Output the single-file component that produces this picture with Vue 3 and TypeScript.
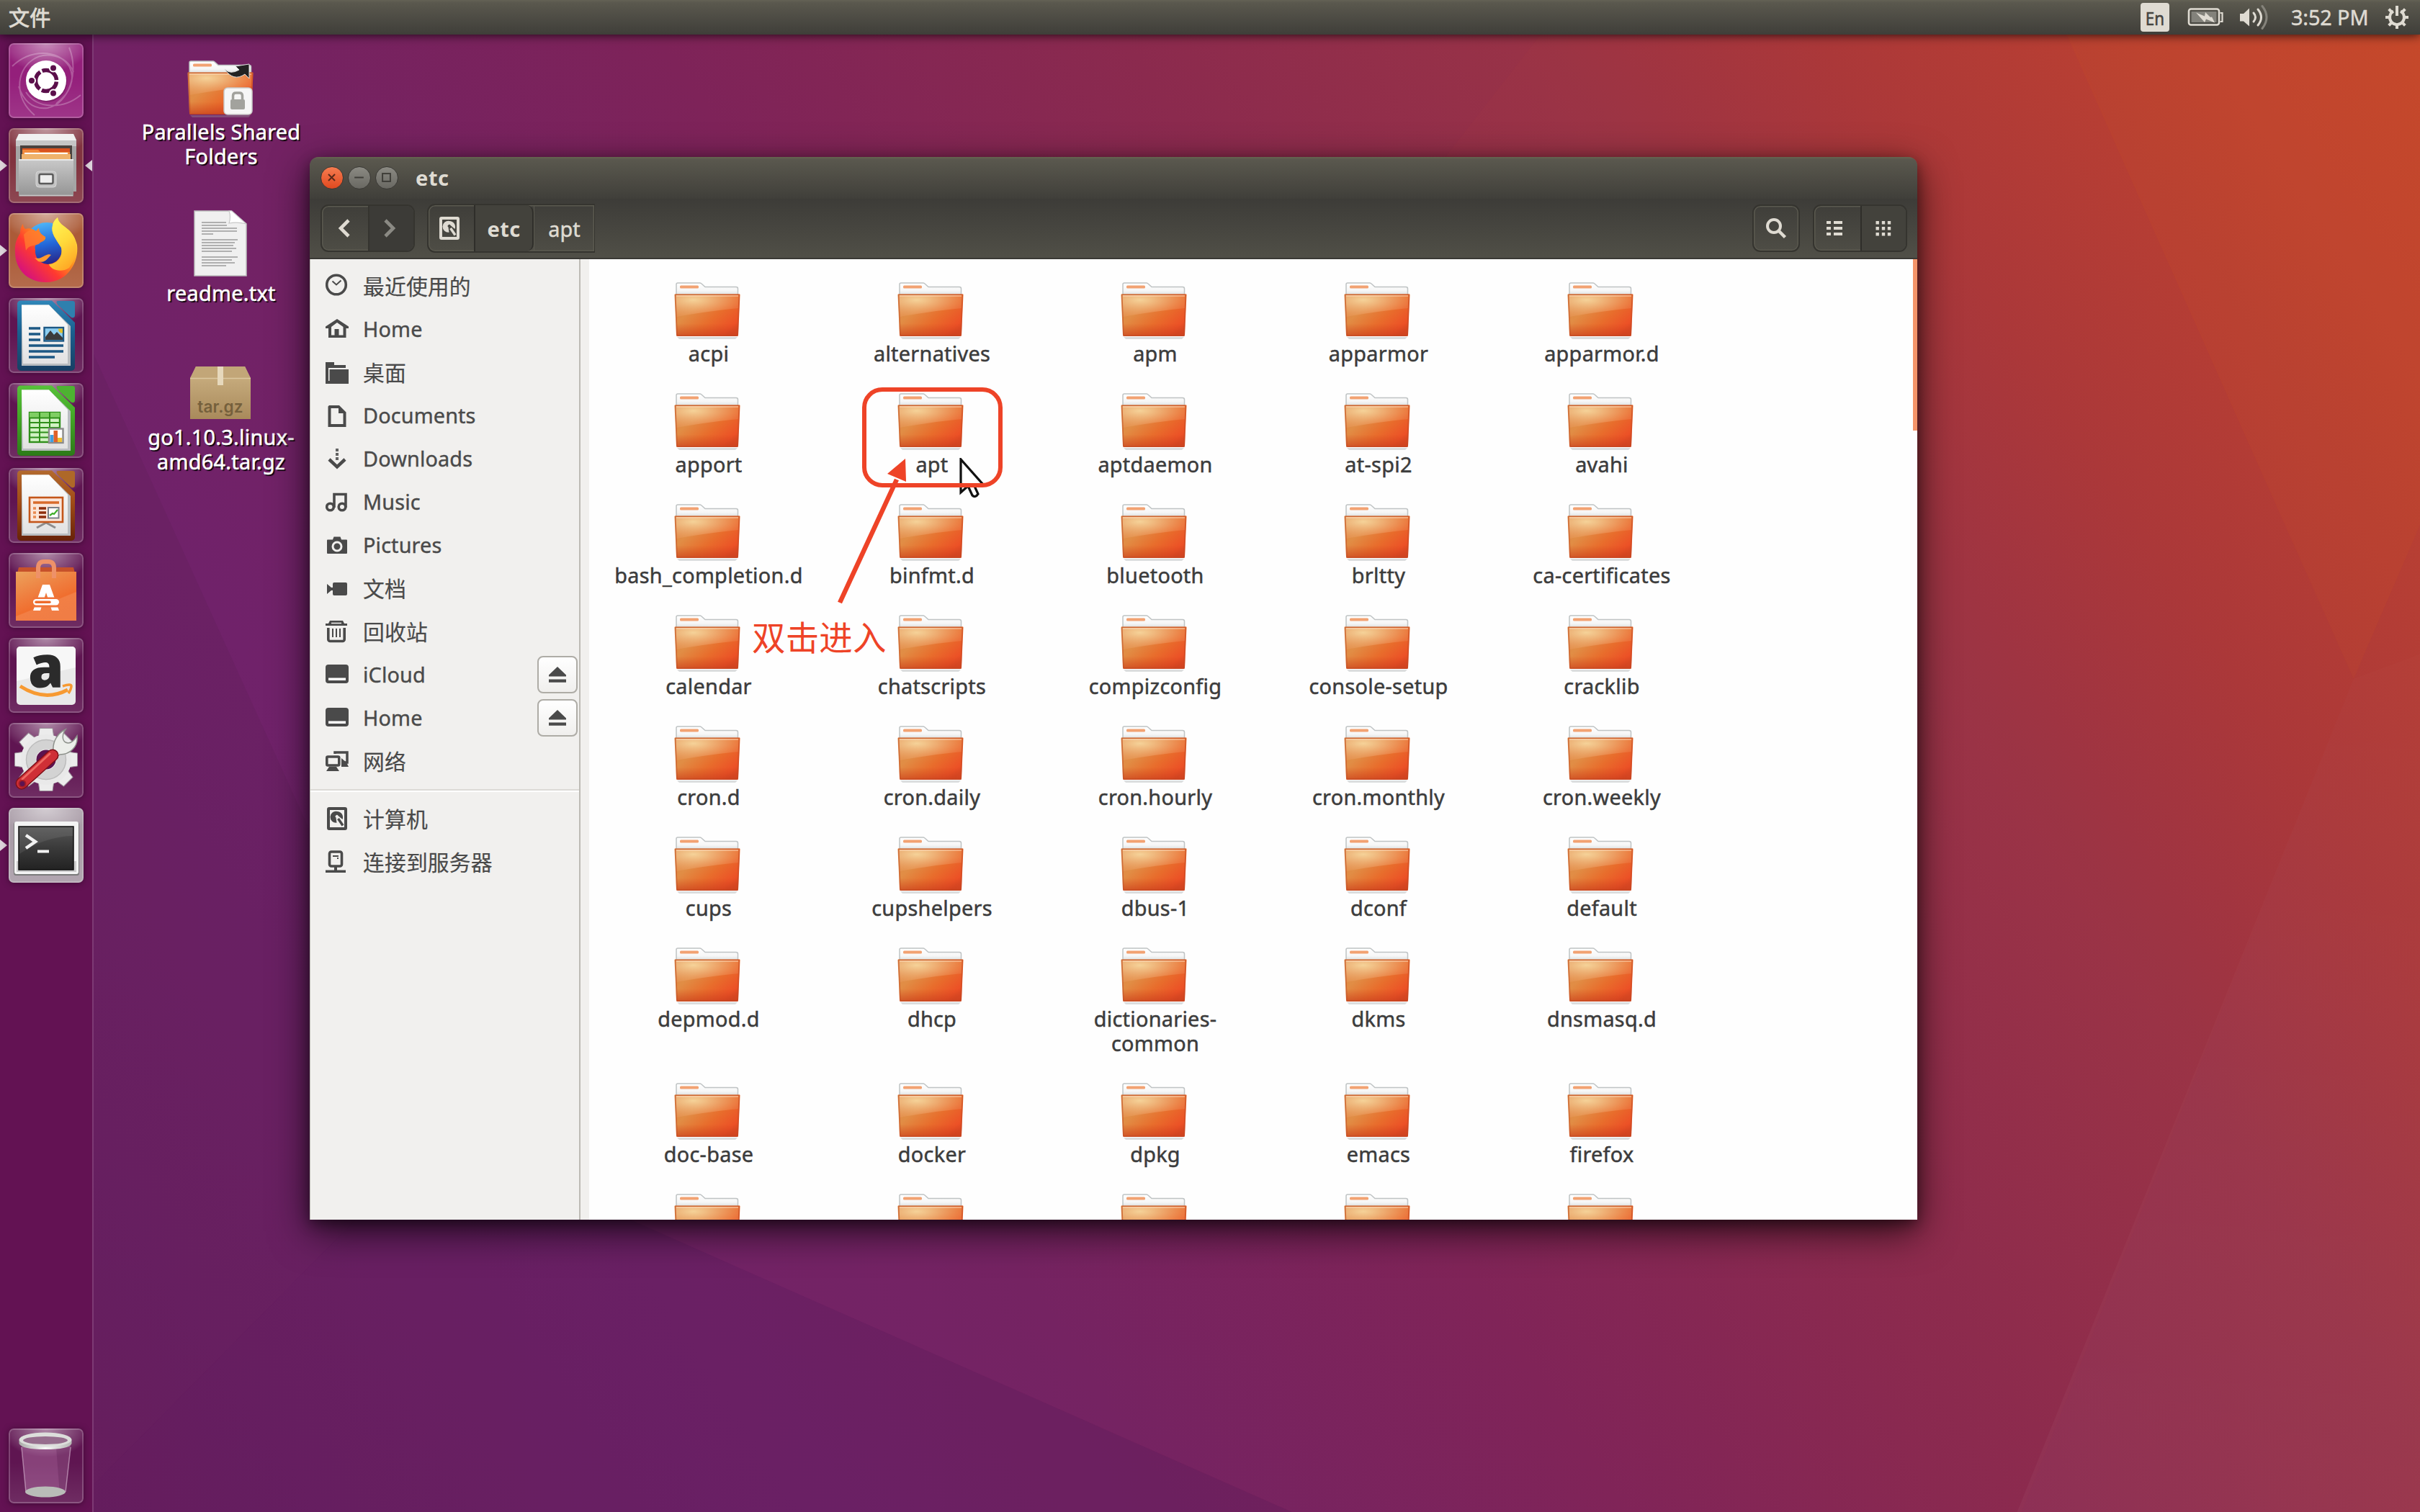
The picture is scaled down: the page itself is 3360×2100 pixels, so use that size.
<script setup lang="ts">
interface LauncherItem {
  id: string
  running?: boolean
  active?: boolean
}
interface Place {
  label: string
  icon: string
  cjk?: boolean
  eject?: boolean
}

const launcher: LauncherItem[] = [
  { id: 'dash' },
  { id: 'cabinet', running: true, active: true },
  { id: 'firefox', running: true },
  { id: 'writer' },
  { id: 'calc' },
  { id: 'impress' },
  { id: 'software' },
  { id: 'amazon' },
  { id: 'settings' },
  { id: 'terminal', running: true },
]

const disk =
  '<path fill-rule="evenodd" d="M5 1h22a3 3 0 0 1 3 3v26a3 3 0 0 1-3 3H5a3 3 0 0 1-3-3V4a3 3 0 0 1 3-3zM6 5v24h20V5z" fill="currentColor"/><path fill="currentColor" fill-rule="evenodd" d="M16 7a8 8 0 0 1 7.500 11l-6-5a2 2 0 1 0-3 2.500l1 7.300A8 8 0 1 1 16 7z"/><path d="M17.500 17l6.500 9.500" stroke="currentColor" stroke-width="3.500"/>'
const drive =
  '<rect y="3" width="32" height="26" rx="4" fill="currentColor"/><rect x="4" y="21.500" width="24" height="3.500" fill="#fff"/>'

const places: Place[] = [
  {
    label: '最近使用的',
    cjk: true,
    icon: '<circle cx="15" cy="15.500" r="13.300" fill="none" stroke="currentColor" stroke-width="3.600"/><path d="M9.500 10.500l5.500 5 6.500-6" fill="none" stroke="currentColor" stroke-width="2"/>',
  },
  {
    label: 'Home',
    icon: '<path d="M0 16v-2.500L16 3l16 10.500V16h-3.500v13H4V16zM8 14v11.500h4.500V17h6v8.500H24.500V14L16 8z" fill="currentColor" fill-rule="evenodd"/>',
  },
  {
    label: '桌面',
    cjk: true,
    icon: '<path d="M0 3h12v4h16v4H4v18h1.500V13H32v20H0z" fill="currentColor"/>',
  },
  {
    label: 'Documents',
    icon: '<path d="M5 3h14l9.500 9.500V33H3.500V4.500zM7.500 7v22h17V14H18V7z" fill="currentColor" fill-rule="evenodd"/>',
  },
  {
    label: 'Downloads',
    icon: '<path d="M14 3h4v4h-4zM14 9h4v4h-4zM14 15h4v4h-4z" fill="currentColor" opacity=".85"/><path d="M5 18l11 10.500L27 18" fill="none" stroke="currentColor" stroke-width="4.500"/>',
  },
  {
    label: 'Music',
    icon: '<circle cx="6.500" cy="24" r="4.800" fill="none" stroke="currentColor" stroke-width="3.600"/><circle cx="23" cy="24" r="4.800" fill="none" stroke="currentColor" stroke-width="3.600"/><path d="M12 25V6.500h16V25" fill="none" stroke="currentColor" stroke-width="3.600"/>',
  },
  {
    label: 'Pictures',
    icon: '<path d="M3 9.500h7l1.500-4h9l1.500 4h7a1 1 0 0 1 1 1V28a1 1 0 0 1-1 1H3a1 1 0 0 1-1-1V10.500a1 1 0 0 1 1-1z" fill="currentColor"/><circle cx="16" cy="19" r="6" fill="none" stroke="#f1f0ee" stroke-width="3"/>',
  },
  {
    label: '文档',
    cjk: true,
    icon: '<rect x="10" y="9" width="20" height="18" rx="2" fill="currentColor"/><path d="M2 11v14l6-5h3v-4H8z" fill="currentColor"/>',
  },
  {
    label: '回收站',
    cjk: true,
    icon: '<path d="M0 9V6h4l2-4h18l2 4h4v3z" fill="currentColor"/><path d="M8 5.500h14" stroke="#f1f0ee" stroke-width="1.500"/><path d="M3.800 12v16a2.500 2.500 0 0 0 2.500 2.500h17.400a2.500 2.500 0 0 0 2.500-2.500V12" fill="none" stroke="currentColor" stroke-width="3.600"/><path d="M10 13v12M15 13v12M20 13v12" stroke="currentColor" stroke-width="2"/>',
  },
  { label: 'iCloud', icon: drive, eject: true },
  { label: 'Home', icon: drive, eject: true },
  {
    label: '网络',
    cjk: true,
    icon: '<path d="M13 7V5h17v14h-6" fill="none" stroke="currentColor" stroke-width="3.500"/><path d="M22 13v12h10l-3-6z" fill="currentColor"/><rect x="1.800" y="11" width="17" height="12" rx="1.500" fill="#f1f0ee" stroke="currentColor" stroke-width="3.600"/><path d="M5 25h10l4 6H1z" fill="currentColor"/>',
  },
]
const computerPlaces: Place[] = [
  { label: '计算机', cjk: true, icon: disk },
  {
    label: '连接到服务器',
    cjk: true,
    icon: '<rect x="5.500" y="3" width="17" height="20" rx="2.500" fill="none" stroke="currentColor" stroke-width="3.600"/><path d="M10 8h8v2h-8zM16 11h2v2h-2zM12 23h4v7h-4zM0 28.500h28V32H0z" fill="currentColor"/>',
  },
]

const rows: string[][] = [
  ['acpi', 'alternatives', 'apm', 'apparmor', 'apparmor.d'],
  ['apport', 'apt', 'aptdaemon', 'at-spi2', 'avahi'],
  ['bash_completion.d', 'binfmt.d', 'bluetooth', 'brltty', 'ca-certificates'],
  ['calendar', 'chatscripts', 'compizconfig', 'console-setup', 'cracklib'],
  ['cron.d', 'cron.daily', 'cron.hourly', 'cron.monthly', 'cron.weekly'],
  ['cups', 'cupshelpers', 'dbus-1', 'dconf', 'default'],
  ['depmod.d', 'dhcp', 'dictionaries-\ncommon', 'dkms', 'dnsmasq.d'],
  ['doc-base', 'docker', 'dpkg', 'emacs', 'firefox'],
  ['', '', '', '', ''],
]

const gearTeeth = [0, 45, 90, 135, 180, 225, 270, 315]
</script>

<template>
  <div class="screen">
    <svg class="wallpaper" viewBox="0 0 1568 980" preserveAspectRatio="none">
      <defs>
        <linearGradient id="wall" gradientUnits="userSpaceOnUse" x1="-449" y1="294" x2="1098" y2="-719">
          <stop offset="0" stop-color="#671d60" />
          <stop offset=".236" stop-color="#70226a" />
          <stop offset=".345" stop-color="#732263" />
          <stop offset=".476" stop-color="#7e2359" />
          <stop offset=".612" stop-color="#8b2a4e" />
          <stop offset=".725" stop-color="#983247" />
          <stop offset=".816" stop-color="#aa383a" />
          <stop offset=".94" stop-color="#bf4330" />
          <stop offset="1" stop-color="#c4472c" />
        </linearGradient>
        <linearGradient id="facet" x1="0" y1="0" x2="0" y2="1">
          <stop offset="0" stop-color="#fff" stop-opacity=".01" />
          <stop offset="1" stop-color="#fff" stop-opacity=".035" />
        </linearGradient>
        <linearGradient id="folderFace" x1="0" y1="0" x2="1" y2=".75">
          <stop offset="0" stop-color="#dd8a45" />
          <stop offset=".35" stop-color="#e18d45" />
          <stop offset=".65" stop-color="#e86d2c" />
          <stop offset=".92" stop-color="#ec5126" />
          <stop offset="1" stop-color="#e04a24" />
        </linearGradient>
        <radialGradient id="folderGlow" cx=".28" cy=".22" r=".75">
          <stop offset="0" stop-color="#f8dca4" stop-opacity=".88" />
          <stop offset=".55" stop-color="#f6c795" stop-opacity=".48" />
          <stop offset="1" stop-color="#f5b080" stop-opacity=".2" />
        </radialGradient>
        <linearGradient id="folderFoot" x1="0" y1="0" x2="0" y2="1">
          <stop offset=".7" stop-color="#c8421c" stop-opacity="0" />
          <stop offset="1" stop-color="#c23c1c" stop-opacity=".6" />
        </linearGradient>
        <linearGradient id="folderTab" x1="0" y1="0" x2="0" y2="1">
          <stop offset="0" stop-color="#fff" />
          <stop offset=".6" stop-color="#f6f6f6" />
          <stop offset="1" stop-color="#d5dada" />
        </linearGradient>
        <symbol id="folder" viewBox="0 0 92 80">
          <path d="M4 76h84l-3 3H7z" fill="#9aa0a4" opacity=".35" />
          <path d="M3 19V3a2 2 0 0 1 2-2h31a3 3 0 0 1 2 1l5 4.500h43a2.500 2.500 0 0 1 2.500 2.500v10z" fill="url(#folderTab)" stroke="#bfc3c4" stroke-width="1.500" />
          <rect x="8" y="4.500" width="26" height="4" rx="1.500" fill="#f2a272" />
          <path d="M1.500 16.500h89a1 1 0 0 1 1 1.200L89 73a2 2 0 0 1-2 2H5a2 2 0 0 1-2-2L.5 17.700a1 1 0 0 1 1-1.200z" fill="url(#folderFace)" />
          <path d="M1.500 16.500h89a1 1 0 0 1 1 1.200L89 73a2 2 0 0 1-2 2H5a2 2 0 0 1-2-2L.5 17.700a1 1 0 0 1 1-1.200z" fill="url(#folderFoot)" />
          <path d="M2 18h88l-.8 18Q48 40 3 48z" fill="url(#folderGlow)" />
          <path d="M1.800 17.200h88.500L88 74H4z" fill="none" stroke="#c04a25" stroke-opacity=".55" stroke-width="1.500" />
          <path d="M3 19h86" stroke="#fde0c4" stroke-opacity=".6" stroke-width="1.300" />
        </symbol>
      </defs>
      <rect width="1568" height="980" fill="url(#wall)" />
      <path d="M1000 20H1340L1525 440L1310 980H837L407 790L860 200z" fill="#ff6030" opacity=".02" />
      <path d="M1338 20H1568V340L1525 440z" fill="#d85a20" opacity=".12" />
      <path d="M1525 440L1568 424V980H1307z" fill="url(#facet)" />
      <path d="M60 228L315 790L231 790L60 963z" fill="#5d2052" opacity=".22" />
      <path d="M60 963L231 790H407L837 980H60z" fill="#551a50" opacity=".22" />
    </svg>

    <header class="panel">
      <span class="app-name">文件</span>
      <div class="indicators">
        <span class="lang"><span class="lang-code">En</span></span>
        <svg class="battery" viewBox="0 0 50 28">
          <rect x="2" y="2.500" width="42" height="22" rx="3" fill="none" stroke="#dfdbd2" stroke-width="2.600" />
          <rect x="5" y="5.500" width="36" height="16" fill="#83827b" stroke="#4a4943" stroke-width="1" />
          <path d="M45.500 8h3v12h-3" fill="none" stroke="#dfdbd2" stroke-width="2.200" />
          <path d="M12 7.500l12 5 1-5.500 7 7 2-.5 4 8-12-5-2 4.500z" fill="#dfdbd2" />
        </svg>
        <svg class="volume" viewBox="0 0 42 36" fill="none" stroke-linecap="round">
          <path d="M1 13h5l8-7.500v25l-8-7H1z" fill="#dfdbd2" />
          <path d="M20 12q5 6 0 12" stroke="#dfdbd2" stroke-width="3" />
          <path d="M26 7q9 11 0 22" stroke="#dfdbd2" stroke-width="3" />
          <path d="M32 2.500q12 15.500 0 31" stroke="#85837b" stroke-width="3" />
        </svg>
        <span class="clock">3:52 PM</span>
        <svg class="session" viewBox="-17 -17 34 34">
          <path d="M-5-8.500A10 10 0 1 0 5-8.500" fill="none" stroke="#dfdbd2" stroke-width="4" />
          <path d="M0-16V-2" stroke="#dfdbd2" stroke-width="4" />
          <g stroke="#dfdbd2" stroke-width="4">
            <path v-for="a in [45, 90, 135, 180, 225, 270, 315]" :key="a" d="M0-11V-16" :transform="`rotate(${a})`" />
          </g>
        </svg>
      </div>
    </header>

    <div class="workspace">
      <nav class="launcher">
        <div v-for="item in launcher" :key="item.id" class="slot">
          <i v-if="item.running" class="pip left"></i>
          <i v-if="item.active" class="pip right"></i>
          <div class="tile" :class="'tile-' + item.id">
            <svg v-if="item.id === 'dash'" viewBox="0 0 104 104" fill="none">
              <path d="M5 32C30 8 68 8 84 32C94 52 84 70 66 84M84 6C98 40 84 84 54 90C36 92 22 84 14 60M36 100C8 76 10 40 32 24C50 10 80 16 90 40M100 72C76 92 40 92 24 68" stroke="#fff" stroke-opacity=".25" stroke-width="2" />
              <circle cx="53" cy="54" r="28" fill="#5a0e48" opacity=".35" />
              <circle cx="52" cy="52" r="28" fill="#fff" />
              <circle cx="52" cy="52" r="14.500" stroke="#5b0f4b" stroke-width="5.500" stroke-dasharray="27.400 3" stroke-dashoffset="-1.500" />
              <g fill="#5b0f4b" stroke="#fff" stroke-width="2">
                <circle cx="32" cy="52" r="5" />
                <circle cx="62" cy="34.500" r="5" />
                <circle cx="62" cy="69.500" r="5" />
              </g>
            </svg>

            <svg v-else-if="item.id === 'cabinet'" viewBox="0 0 104 104">
              <defs>
                <linearGradient id="steel" x1="0" y1="0" x2="0" y2="1">
                  <stop offset="0" stop-color="#c9c9c9" />
                  <stop offset="1" stop-color="#949494" />
                </linearGradient>
              </defs>
              <path d="M14 8h76l4 8v72H10V16z" fill="#a5a5a5" />
              <path d="M14 8h76l4 9H10z" fill="#f1f1f1" />
              <path d="M10 17h84v8H10z" fill="#c6c6c6" />
              <rect x="16" y="24" width="72" height="22" fill="#4a423e" />
              <path d="M19 28h66v16H19z" fill="#d9521f" />
              <path d="M19 30h22l3 3h41v11H19z" fill="#f08a3e" />
              <path d="M18 36h68v10H18z" fill="#efb26b" />
              <path d="M22 35h60" stroke="#fff" stroke-width="2" />
              <path d="M14 43h76v51.500H14z" fill="url(#steel)" />
              <path d="M14 44h76" stroke="#e8e8e8" stroke-width="2" />
              <path d="M15 93.500h74" stroke="#c9c9c9" stroke-width="1.500" />
              <rect x="38" y="60" width="28" height="22" rx="4" fill="#c3c3c3" stroke="#d6d6d6" stroke-width="1" />
              <rect x="42.500" y="64" width="19" height="13" rx="2" fill="#eee" stroke="#5a5a5a" stroke-width="2.500" />
            </svg>

            <svg v-else-if="item.id === 'firefox'" viewBox="0 0 104 104">
              <defs>
                <linearGradient id="fox" x1=".9" y1=".05" x2=".12" y2=".85">
                  <stop offset="0" stop-color="#fff44f" />
                  <stop offset=".25" stop-color="#ffc22e" />
                  <stop offset=".45" stop-color="#ff8a1f" />
                  <stop offset=".68" stop-color="#ff3a2f" />
                  <stop offset="1" stop-color="#d6127c" />
                </linearGradient>
                <linearGradient id="globe" x1=".3" y1="0" x2=".5" y2="1">
                  <stop offset="0" stop-color="#4fb8f8" />
                  <stop offset=".5" stop-color="#2366d8" />
                  <stop offset="1" stop-color="#2a1a78" />
                </linearGradient>
                <linearGradient id="flame" x1=".3" y1="0" x2=".7" y2="1">
                  <stop offset="0" stop-color="#fff455" />
                  <stop offset=".5" stop-color="#ffd83a" />
                  <stop offset="1" stop-color="#ffa524" />
                </linearGradient>
              </defs>
              <circle cx="53" cy="45" r="32" fill="url(#globe)" />
              <path d="M20 15C20 18 21 20 23 22C29 20 34 22 38 25C40 23 41 21 42 21C42 26 45 30 51 33C52 38 47 39 42 42C36 43 36 47 37 51C36 60 42 70 54 71C66 71 76 60 73 48C66 36 58 28 61 17C62 11 66 8 68 6C69 14 76 17 84 24C90 30 92 34 95 44C98 68 82 96 52 96C26 96 9 78 9 54C8 42 12 34 16 28C16 22 18 17 20 15z" fill="url(#fox)" />
              <path d="M68 6C69 14 76 17 84 24C96 36 98 58 84 76C72 84 58 78 56 71C68 70 76 60 73 48C66 36 58 28 61 17C62 11 66 8 68 6z" fill="url(#flame)" />
              <path d="M36 62C46 66 52 54 59 58C54 62 52 70 41 67z" fill="#ff9a30" />
              <path d="M24 52C28 44 34 46 42 43L51 33C45 30 42 26 42 21L38 25C32 22 26 24 21 30z" fill="#ff7b2e" opacity=".8" />
            </svg>

            <svg v-else-if="item.id === 'writer' || item.id === 'calc' || item.id === 'impress'" viewBox="0 0 104 104">
              <defs>
                <linearGradient :id="'frame-' + item.id" x1="0" y1="0" x2="0" y2="1">
                  <stop offset="0" :stop-color="item.id === 'writer' ? '#2f87b9' : item.id === 'calc' ? '#57c13a' : '#b36a2e'" />
                  <stop offset=".45" :stop-color="item.id === 'writer' ? '#1a5f8f' : item.id === 'calc' ? '#43a726' : '#a04b16'" />
                  <stop offset="1" :stop-color="item.id === 'writer' ? '#173f63' : item.id === 'calc' ? '#2c7a18' : '#672208'" />
                </linearGradient>
                <linearGradient id="sheet" x1="0" y1="0" x2="0" y2="1">
                  <stop offset="0" stop-color="#fff" />
                  <stop offset="1" stop-color="#e2e2e2" />
                </linearGradient>
              </defs>
              <path d="M16 3.500h44L92 34v62a5 5 0 0 1-5 5H17a5 5 0 0 1-5-5V8a5 5 0 0 1 4-4.500z" :fill="`url(#frame-${item.id})`" />
              <path d="M68 4h21a3 3 0 0 1 3 3v17c0 4-4 4-6 2L69 10c-3-3-3-6-1-6z" :fill="item.id === 'writer' ? '#2f80ae' : item.id === 'calc' ? '#4db231' : '#ae6828'" />
              <path d="M18 9.500h38L86 39v55H18z" fill="#b9bdc0" />
              <path d="M18 9.500h38L82 37v54H20z" fill="url(#sheet)" />
              <g v-if="item.id === 'writer'">
                <path d="M28 42h16M28 50h16M28 58h16M28 66h48M28 74h48M28 82h36" stroke="#1d5884" stroke-width="3.400" />
                <rect x="49.500" y="41" width="26.500" height="18.500" fill="#8ccdf0" stroke="#1d5884" stroke-width="2.400" />
                <path d="M51 58v-4l7-9 5 6 4-4 8 8v3z" fill="#3b3b3b" />
                <path d="M69 42.500h6v6c-4 0-6-2-6-6z" fill="#e0c02c" />
              </g>
              <g v-else-if="item.id === 'calc'">
                <rect x="29" y="41" width="42" height="41" fill="#d2f2c4" stroke="#2f8f1b" stroke-width="2.400" />
                <rect x="29" y="41" width="42" height="7" fill="#7fce63" />
                <path d="M29 48.500h42M29 55h42M29 62h42M29 68.500h42M29 75.500h42M43 41v41M57 41v41" stroke="#2f8f1b" stroke-width="2" />
                <rect x="56" y="63.500" width="19.500" height="19.500" fill="#fff" stroke="#8b8b8b" stroke-width="2.400" />
                <path d="M57.500 72h5v10h-5z" fill="#3f9fe0" />
                <path d="M62.500 66h5.500v16h-5.500z" fill="#e0622a" />
                <path d="M68 76h6v6h-6z" fill="#efc030" />
              </g>
              <g v-else>
                <path d="M52 76L39 83M52 76l13 7" stroke="#8d8d8d" stroke-width="3" />
                <rect x="29" y="41" width="46" height="34" fill="#fbe6da" stroke="#c4561a" stroke-width="2.600" />
                <path d="M34 48h36" stroke="#d86b2b" stroke-width="3.600" />
                <path d="M34 56h4M34 62h4M34 68h4" stroke="#e88a52" stroke-width="3.400" />
                <path d="M42 56h10M42 62h10M42 68h10" stroke="#8f2f0d" stroke-width="3.400" />
                <rect x="55" y="55" width="14.500" height="14.500" fill="#fff" stroke="#7a8088" stroke-width="2" />
                <path d="M57 66l4-3 2 1 5-6" fill="none" stroke="#3fae2a" stroke-width="2.200" />
              </g>
            </svg>

            <svg v-else-if="item.id === 'software'" viewBox="0 0 104 104">
              <defs>
                <linearGradient id="bag" x1="0" y1="0" x2=".5" y2="1">
                  <stop offset="0" stop-color="#eca25c" />
                  <stop offset=".5" stop-color="#ef7c3d" />
                  <stop offset=".72" stop-color="#f06e2e" />
                  <stop offset=".74" stop-color="#f27f45" />
                  <stop offset="1" stop-color="#f07d45" />
                </linearGradient>
              </defs>
              <path d="M14 20h76l2 8H12z" fill="#c7512a" />
              <path d="M10 26h84v68H10z" fill="url(#bag)" />
              <path d="M41 35V21q0-9 8-9h6q8 0 8 9v14" fill="none" stroke="#ee9168" stroke-width="6" />
              <path d="M47 44h10l13 36H60l-8-25-8 25H34z" fill="#fff" />
              <path d="M34 61.500h36v14H34z" fill="#f0743a" />
              <rect x="34" y="64" width="36" height="8.500" rx="4.200" fill="#fff" />
              <path d="M38 68.300h19" stroke="#ee6b2c" stroke-width="3.400" stroke-linecap="round" />
            </svg>

            <svg v-else-if="item.id === 'amazon'" viewBox="0 0 104 104">
              <rect x="11" y="12" width="82" height="81" rx="5" fill="#e9e9e9" />
              <path d="M11 17a5 5 0 0 1 5-5h72a5 5 0 0 1 5 5v24L11 60z" fill="#f7f7f7" />
              <text x="52" y="69" text-anchor="middle" font-family="Open Sans" font-weight="800" font-size="80" fill="#2b2b2b">a</text>
              <path d="M16 67q34 22 66 5" fill="none" stroke="#f79a32" stroke-width="5" />
              <path d="M75 67q12-4 12 0t-4 10" fill="none" stroke="#f79a32" stroke-width="3.500" />
            </svg>

            <svg v-else-if="item.id === 'settings'" viewBox="0 0 104 104">
              <g transform="translate(52 51)">
                <path v-for="a in gearTeeth" :key="a" d="M-9-43.500H9l2 14H-11z" fill="#ececec" stroke="#9a8f98" stroke-width="1" :transform="`rotate(${a})`" />
                <circle r="24" fill="none" stroke="#e9e9e9" stroke-width="22" />
                <circle r="21" fill="none" stroke="#d3d3d3" stroke-width="13" />
                <circle r="27.500" fill="none" stroke="#bdbdbd" stroke-width="1.500" />
                <circle r="13.500" fill="#5c1350" />
              </g>
              <path d="M62 38C61 26 68 14 79 9C74 16 74 24 79 27C85 30 90 26 95 18C97 34 84 44 71 44L65 48L59 42z" fill="#eceeea" stroke="#8d918b" stroke-width="1.500" />
              <path d="M18 84L61 45" stroke="#7d1018" stroke-width="17" stroke-linecap="round" />
              <path d="M18 84L61 45" stroke="#cf2f36" stroke-width="14" stroke-linecap="round" />
              <path d="M19 78L57 43" stroke="#ee6a62" stroke-width="3" stroke-linecap="round" />
              <circle cx="19" cy="84.500" r="4.500" fill="#5c1350" stroke="#a51d26" stroke-width="2" />
            </svg>

            <svg v-else viewBox="0 0 104 104">
              <defs>
                <linearGradient id="screenGlass" x1="0" y1="0" x2="0" y2="1">
                  <stop offset="0" stop-color="#565656" />
                  <stop offset=".5" stop-color="#3a3a3a" />
                  <stop offset="1" stop-color="#222" />
                </linearGradient>
              </defs>
              <rect x="7" y="20" width="91" height="74" rx="3" fill="#7b7b7b" />
              <rect x="8" y="19" width="89" height="73" rx="3" fill="#f4f4f4" />
              <path d="M11 74h83v15H11z" fill="#cfcfcf" />
              <rect x="14" y="26" width="76" height="60" fill="url(#screenGlass)" stroke="#111" stroke-width="1.500" />
              <path d="M15 27h74v12Q50 40 15 64z" fill="#fff" opacity=".08" />
              <path d="M24 38l13 9-13 9" fill="none" stroke="#f2f2f2" stroke-width="4.500" />
              <path d="M40 60.500h16" stroke="#f2f2f2" stroke-width="4" />
            </svg>
          </div>
        </div>

        <div class="slot trash-slot">
          <div class="tile">
            <svg viewBox="0 0 104 104">
              <defs>
                <linearGradient id="rim" x1="0" y1="0" x2="1" y2="0">
                  <stop offset="0" stop-color="#a9aba8" />
                  <stop offset=".5" stop-color="#f7f7f6" />
                  <stop offset="1" stop-color="#b5b7b4" />
                </linearGradient>
              </defs>
              <path d="M18 22H86L79 88Q51 100 24 88z" fill="#c98abb" fill-opacity=".38" />
              <path d="M66 26H86L79 88l-8 4z" fill="#4a0f40" fill-opacity=".22" />
              <path d="M18 26l6 62M86 26l-7 62" stroke="#dcbcd6" stroke-opacity=".6" stroke-width="1.500" />
              <ellipse cx="51" cy="88" rx="28" ry="7.500" fill="#b9bcb8" />
              <path d="M14.500 16v5q4 8 36.500 8t36.500-8v-5z" fill="url(#rim)" />
              <ellipse cx="51" cy="15.500" rx="36.500" ry="10" fill="#dcdedb" />
              <ellipse cx="51" cy="16.500" rx="31" ry="5.500" fill="#966d8d" />
            </svg>
          </div>
        </div>
      </nav>

      <div class="desktop-icons">
        <div class="desk-item shared">
          <svg class="desk-icon" viewBox="0 0 92 82">
            <use href="#folder" width="92" height="80" />
            <path d="M52 12Q60 20 72 13L67 8L86 5V25L80 19Q64 30 52 12z" fill="#222" stroke="#ddd" stroke-width="1" />
            <rect x="51" y="38" width="39" height="37" rx="5" fill="#f6f6f6" stroke="#c9c9c9" stroke-width="1.500" />
            <rect x="60" y="54" width="20" height="14" rx="2" fill="#a2a29d" />
            <path d="M63.500 54v-5q0-4 4-4h5q4 0 4 4v5" fill="none" stroke="#a2a29d" stroke-width="3.500" />
          </svg>
          <span class="desk-label">Parallels Shared<br />Folders</span>
        </div>
        <div class="desk-item readme">
          <svg class="desk-icon" viewBox="0 0 74 92">
            <path d="M1 1h51l21 18v72H1z" fill="#f0f0f0" stroke="#bdbdbd" stroke-width="1.500" />
            <path d="M49 1q3 8 0 17 12-2 24 1L53 1z" fill="#fff" stroke="#c8c8c8" stroke-width="1.200" />
            <path d="M11 17h34M11 21h35M11 25h49M11 29h49M11 33h16M11 41h50M11 45h46M11 49h44M11 53h48M11 57h42M11 65h50M11 69h42M11 73h46M11 77h34" stroke="#9b9b9b" stroke-width="1.500" />
          </svg>
          <span class="desk-label">readme.txt</span>
        </div>
        <div class="desk-item archive">
          <svg class="desk-icon" viewBox="0 0 84 76">
            <defs>
              <linearGradient id="box" x1="0" y1="0" x2="0" y2="1">
                <stop offset="0" stop-color="#cdb385" />
                <stop offset="1" stop-color="#a98a5b" />
              </linearGradient>
            </defs>
            <path d="M8 1h68l8 17v56H0V18z" fill="url(#box)" />
            <path d="M8 1h68l8 16H0z" fill="#c2a678" />
            <path d="M0 17.500h84" stroke="#dcc8a0" stroke-width="1.500" />
            <path d="M38 1h8v26h-8z" fill="#e6d8bc" />
            <text x="42" y="65" text-anchor="middle" font-family="Inter" font-weight="600" font-size="22.500" fill="#75603c">tar.gz</text>
          </svg>
          <span class="desk-label">go1.10.3.linux-<br />amd64.tar.gz</span>
        </div>
      </div>
    </div>

    <section class="window">
      <div class="titlebar">
        <span class="ctl close"><svg viewBox="0 0 32 32"><path d="M11 11l10 10M21 11L11 21" stroke="#5b2a1a" stroke-width="2.200" /></svg></span>
        <span class="ctl"><svg viewBox="0 0 32 32"><path d="M9 16h14" stroke="#3f3e39" stroke-width="2.200" /></svg></span>
        <span class="ctl"><svg viewBox="0 0 32 32"><rect x="10" y="10" width="12" height="12" fill="none" stroke="#3f3e39" stroke-width="2.200" /></svg></span>
        <span class="title">etc</span>
      </div>
      <div class="toolbar">
        <div class="group nav">
          <span class="btn"><svg viewBox="0 0 20 28"><path d="M17 3L6 14l11 11" fill="none" stroke="#dfdbd2" stroke-width="4.600" /></svg></span>
          <span class="btn off"><svg viewBox="0 0 20 28"><path d="M3 3l11 11L3 25" fill="none" stroke="#8b8a84" stroke-width="4.600" /></svg></span>
        </div>
        <div class="group path">
          <span class="btn"><svg class="disk" viewBox="0 0 32 34" v-html="disk"></svg></span>
          <span class="btn on"><b>etc</b></span>
          <span class="btn last">apt</span>
        </div>
        <div class="group find">
          <span class="btn"><svg class="glass" viewBox="0 0 30 30"><circle cx="12" cy="12" r="9" fill="none" stroke="#dfdbd2" stroke-width="4" /><path d="M18 18l9.500 9.500" stroke="#dfdbd2" stroke-width="4.500" /></svg></span>
        </div>
        <div class="group views">
          <span class="btn list"><svg class="view" viewBox="0 0 24 22" fill="#dfdbd2"><path d="M1 1h6v4H1zM11 1h12v4H11zM1 9h6v4H1zM11 9h12v4H11zM1 17h6v4H1zM11 17h12v4H11z" /></svg></span>
          <span class="btn on"><svg class="view" viewBox="0 0 24 22" fill="#dfdbd2"><path d="M1.500 1h4.400v4.400H1.500zM9.800 1h4.400v4.400H9.800zM17.800 1h4.400v4.400h-4.400zM1.500 9h4.400v4.400H1.500zM9.800 9h4.400v4.400H9.800zM17.800 9h4.400v4.400h-4.400zM1.500 17h4.400v4.400H1.500zM9.800 17h4.400v4.400H9.800zM17.800 17h4.400v4.400h-4.400z" /></svg></span>
        </div>
      </div>
      <div class="content">
        <aside class="sidebar">
          <div v-for="(p, i) in places" :key="i" class="place">
            <svg class="place-icon" viewBox="0 0 32 34" v-html="p.icon"></svg>
            <span class="place-label" :class="{ cjk: p.cjk }">{{ p.label }}</span>
            <span v-if="p.eject" class="eject">
              <svg viewBox="0 0 24 22"><path d="M12 0l12 11.500v2H0v-2zM0 17.500h24v4.300H0z" fill="#4a4a4a" /></svg>
            </span>
          </div>
          <div class="separator"></div>
          <div v-for="p in computerPlaces" :key="p.label" class="place">
            <svg class="place-icon" viewBox="0 0 32 34" v-html="p.icon"></svg>
            <span class="place-label" :class="{ cjk: p.cjk }">{{ p.label }}</span>
          </div>
        </aside>
        <div class="gutter"></div>
        <main class="files">
          <div v-for="(row, r) in rows" :key="r" class="row">
            <div v-for="(name, c) in row" :key="c" class="file">
              <svg class="folder"><use href="#folder" width="92" height="80" /></svg>
              <span class="name">{{ name }}</span>
            </div>
          </div>
          <i class="scrollbar"></i>
        </main>
      </div>
    </section>

    <svg class="pointer" viewBox="0 0 40 56">
      <path d="M3 2V48L13 39L19 52Q23 56 27 50L21 37H34z" fill="#fff" stroke="#111" stroke-width="3.200" />
    </svg>
    <div class="callout"></div>
    <svg class="arrow" viewBox="0 0 110 210">
      <path d="M11 205L90 34" stroke="#ee4327" stroke-width="6.500" />
      <path d="M102 5L77 26L103 37z" fill="#ee4327" />
    </svg>
    <span class="note">双击进入</span>
  </div>
</template>

<style>
html,
body {
  margin: 0;
  overflow: hidden;
}
</style>

<style scoped>
.screen {
  position: relative;
  width: 3360px;
  height: 2100px;
  overflow: hidden;
  display: flex;
  flex-direction: column;
  background: #70226a;
  font-family: "Noto Sans", "Noto Sans CJK SC", sans-serif;
  font-size: 28.8px;
  letter-spacing: 0.15px;
}
svg {
  display: block;
}
.wallpaper {
  position: absolute;
  inset: 0;
  width: 3360px;
  height: 2100px;
}
.panel {
  position: relative;
  z-index: 2;
  flex: none;
  height: 48px;
  box-sizing: border-box;
  padding: 0 15px 0 12px;
  display: flex;
  align-items: center;
  justify-content: space-between;
  color: #dfdbd2;
  background: linear-gradient(#646255 0, #5a584e 8%, #3f3e39 100%);
  box-shadow: 0 0 14px rgba(0, 0, 0, 0.85);
}
.app-name {
  padding-top: 2px;
  font-size: 29px;
  line-height: 46px;
  -webkit-text-stroke: 0.9px;
}
.indicators {
  display: flex;
  align-items: center;
  line-height: 48px;
}
.lang {
  width: 40px;
  height: 40px;
  border-radius: 4px;
  background: #dfdbd2;
  color: #45443f;
  font-size: 26px;
  line-height: 42px;
  text-align: center;
}
.lang-code {
  display: block;
  transform: scaleX(0.86);
  -webkit-text-stroke: 0.6px;
}
.battery {
  width: 50px;
  height: 28px;
  margin-left: 25px;
}
.volume {
  width: 42px;
  height: 36px;
  margin-left: 22px;
}
.clock {
  width: 106px;
  margin-left: 30px;
  white-space: nowrap;
  letter-spacing: -0.1px;
  -webkit-text-stroke: 0.5px;
}
.session {
  width: 34px;
  height: 34px;
  margin-left: 24px;
}
.workspace {
  position: relative;
  flex: 1;
  min-height: 0;
  display: flex;
}
.launcher {
  flex: none;
  width: 130px;
  box-sizing: border-box;
  padding: 12px 0;
  border-right: 2px solid #7d3a74;
  background: #631253;
  display: flex;
  flex-direction: column;
  gap: 14px;
}
.slot {
  position: relative;
  height: 104px;
  padding-left: 12px;
}
.trash-slot {
  margin-top: auto;
}
.tile {
  position: relative;
  width: 104px;
  height: 104px;
  border-radius: 7px;
  overflow: hidden;
  background-color: #5f1551;
  background-image: radial-gradient(ellipse 62px 40px at 50% 0, rgba(255, 255, 255, 0.5), rgba(255, 255, 255, 0.12) 80%, transparent 100%), linear-gradient(transparent 45%, rgba(255, 255, 255, 0.1));
  box-shadow: 0 1px 8px rgba(30, 0, 25, 0.5);
}
.tile::after {
  content: "";
  position: absolute;
  inset: 0;
  border: 2px solid rgba(255, 255, 255, 0.2);
  border-radius: 7px;
}
.tile svg {
  width: 104px;
  height: 104px;
}
.tile-dash {
  background-color: #941f7b;
}
.tile-cabinet {
  background-color: #81333f;
}
.tile-firefox {
  background-color: #ab5b38;
}
.tile-terminal {
  background-color: #a99ca7;
}
.pip {
  position: absolute;
  top: 44px;
  border: 8px solid transparent;
}
.pip.left {
  left: 0;
  border-left: 10px solid #dcd4da;
  border-right: 0;
}
.pip.right {
  right: 0;
  border-right: 10px solid #dcd4da;
  border-left: 0;
}
.desktop-icons {
  width: 208px;
  margin-left: 73px;
  padding-top: 36px;
}
.desk-item {
  display: flex;
  flex-direction: column;
  align-items: center;
}
.desk-label {
  color: #fff;
  text-align: center;
  white-space: nowrap;
  line-height: 34px;
  letter-spacing: 0.3px;
  -webkit-text-stroke: 0.5px;
  text-shadow: 2px 2px 1px rgba(0, 0, 0, 0.9);
}
.shared .desk-icon {
  width: 92px;
  height: 82px;
  margin-left: -3px;
}
.readme {
  margin-top: 58px;
}
.readme .desk-icon {
  width: 74px;
  height: 92px;
  margin: 0 0 6px -3px;
}
.archive {
  margin-top: 84px;
}
.archive .desk-icon {
  width: 84px;
  height: 76px;
  margin: 0 0 6px -3px;
}
.window {
  position: absolute;
  left: 430px;
  top: 218px;
  width: 2232px;
  height: 1476px;
  display: flex;
  flex-direction: column;
  border-radius: 12px 12px 0 0;
  box-shadow: 0 16px 54px rgba(0, 0, 0, 0.7), 0 6px 18px rgba(0, 0, 0, 0.4);
}
.titlebar {
  flex: none;
  height: 58px;
  box-sizing: border-box;
  padding-left: 15px;
  display: flex;
  align-items: center;
  gap: 6px;
  border-radius: 12px 12px 0 0;
  background: linear-gradient(#66644f 0, #5a584e 6%, #403f3a 100%);
}
.ctl {
  width: 32px;
  height: 32px;
  box-sizing: border-box;
  border: 1.5px solid #3a3935;
  border-radius: 50%;
  background: linear-gradient(#8b8a83, #696862);
}
.ctl svg {
  width: 29px;
  height: 29px;
}
.ctl.close {
  background: linear-gradient(#f67c50, #e0491f);
}
.title {
  margin-left: 18px;
  color: #dfdbd2;
  font-weight: 700;
  font-size: 29px;
  line-height: 58px;
  letter-spacing: 0.6px;
}
.toolbar {
  flex: none;
  height: 84px;
  box-sizing: border-box;
  padding: 8px 14px 9px 15px;
  display: flex;
  border-bottom: 2px solid #3a3935;
  background: linear-gradient(#3d3c38, #504f47);
}
.group {
  display: flex;
  height: 66px;
  box-sizing: border-box;
  border: 2px solid #35342f;
  border-radius: 11px;
  box-shadow: inset 0 0 0 1.5px #5a594f;
}
.btn {
  box-sizing: border-box;
  display: flex;
  align-items: center;
  justify-content: center;
  color: #dfdbd2;
}
.btn + .btn {
  border-left: 2px solid #35342f;
}
.btn.on {
  background: #43423c;
  border-color: #2f2e2a;
}
.nav {
  width: 131px;
}
.nav .btn {
  width: 50%;
  padding-right: 3px;
}
.nav svg {
  width: 20px;
  height: 28px;
}
.btn.off {
  background: #3c3b37;
  border-radius: 0 9px 9px 0;
}
.path {
  width: 233px;
  height: 68px;
  margin: -1px 0 0 17px;
  border-radius: 11px 0 0 11px;
  border-right-width: 1px;
}
.path .btn:first-child {
  width: 63px;
  padding-right: 5px;
}
.path .on {
  width: 83px;
  border-radius: 0 10px 10px 0;
  border-right: 2px solid #2f2e2a;
}
.path .last {
  flex: 1;
  border-left: 1px solid #5a594f;
  -webkit-text-stroke: 0.5px;
}
.path .on b {
  font-size: 29px;
  letter-spacing: 0.4px;
}
.disk {
  width: 32px;
  height: 34px;
}
.find {
  width: 66px;
  margin-left: auto;
}
.find .btn {
  width: 100%;
}
.glass {
  width: 30px;
  height: 30px;
}
.views {
  width: 131px;
  margin-left: 18px;
}
.views .btn {
  width: 50%;
}
.views .list {
  padding-right: 7px;
}
.views .on {
  border-radius: 0 9px 9px 0;
}
.view {
  width: 24px;
  height: 22px;
}
.content {
  flex: 1;
  min-height: 0;
  display: flex;
  background: #fff;
}
.sidebar {
  flex: none;
  width: 376px;
  box-sizing: border-box;
  padding-top: 7px;
  border-right: 2px solid #bdbbb5;
  border-left: 1px solid #bdbbb5;
  background: #f1f0ee;
}
.place {
  height: 60px;
  padding: 0 2px 0 21px;
  display: flex;
  align-items: center;
  color: #4a4a4a;
}
.place-icon {
  flex: none;
  width: 32px;
  height: 34px;
  margin-right: 20px;
}
.place-label {
  line-height: 60px;
  -webkit-text-stroke: 0.4px;
}
.place-label.cjk {
  padding-top: 2px;
  line-height: 58px;
  font-size: 29.8px;
  -webkit-text-stroke: 0.2px;
}
.eject {
  margin-left: auto;
  width: 56px;
  height: 52px;
  box-sizing: border-box;
  display: flex;
  align-items: center;
  justify-content: center;
  border: 2px solid #aeaca6;
  border-radius: 8px;
  background: linear-gradient(#fff, #f0efed);
}
.eject svg {
  width: 24px;
  height: 22px;
}
.separator {
  height: 20px;
  box-sizing: border-box;
  padding-top: 9px;
}
.separator::before {
  content: "";
  display: block;
  height: 2px;
  background: #dcdad6;
  border-bottom: 2px solid #fff;
}
.gutter {
  flex: none;
  width: 12px;
  background: #f1f0ee;
}
.files {
  position: relative;
  flex: 1;
  padding: 32px 0 0 11px;
  overflow: hidden;
  background: #fefefe;
}
.row {
  display: flex;
  padding-bottom: 38px;
}
.file {
  width: 310px;
  display: flex;
  flex-direction: column;
  align-items: center;
}
.folder {
  width: 92px;
  height: 82px;
  margin-left: -4px;
}
.name {
  min-height: 34px;
  line-height: 34px;
  text-align: center;
  white-space: pre;
  color: #3c3c3c;
  letter-spacing: 0.3px;
  -webkit-text-stroke: 0.5px;
}
.scrollbar {
  position: absolute;
  top: 0;
  right: 0;
  width: 6px;
  height: 238px;
  background: #f49469;
}
.pointer {
  position: absolute;
  left: 1331px;
  top: 636px;
  width: 40px;
  height: 56px;
}
.callout {
  position: absolute;
  left: 1197px;
  top: 538px;
  width: 195px;
  height: 139px;
  box-sizing: border-box;
  border: 6px solid #ee4327;
  border-radius: 28px;
}
.arrow {
  position: absolute;
  left: 1155px;
  top: 632px;
  width: 110px;
  height: 210px;
}
.note {
  position: absolute;
  left: 1044px;
  top: 854px;
  font-family: "Noto Sans CJK SC", sans-serif;
  font-weight: 400;
  font-size: 46.5px;
  line-height: 58px;
  color: #ee4327;
}
</style>
